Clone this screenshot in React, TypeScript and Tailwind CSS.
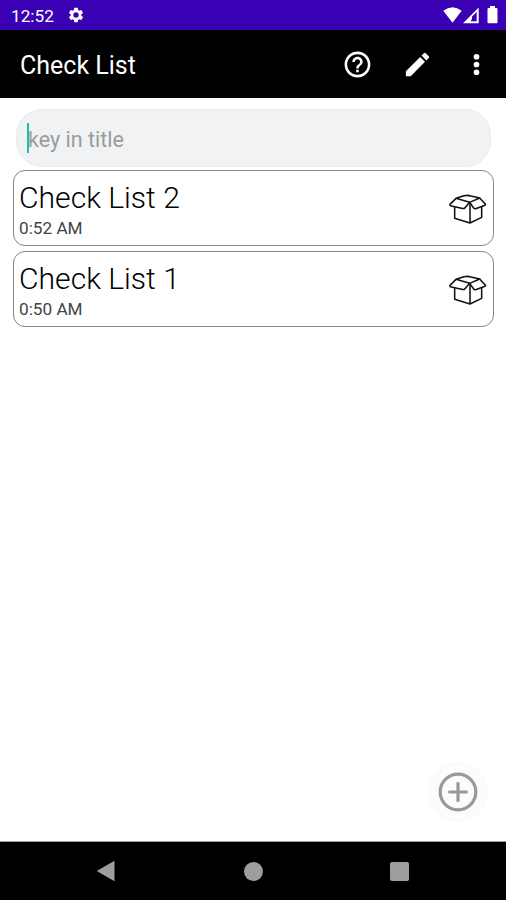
import React from "react";

function BoxIcon() {
  return (
    <svg className="h-[31px] w-[38px]" viewBox="39 42 114 93" fill="none" stroke="#111" strokeWidth="4.6" strokeLinejoin="round">
      <path d="M60 55 L84 47.500 Q94 44.500 105 48 L131 54 L101 67 Z" />
      <path d="M60 55 L42 73 Q41 77 46 78 L80 85.500 Q84 86.500 87 83 L101 67 L113 84 Q115 87 119 86 L147 76 Q150 74 147 71 L131 54" />
      <path d="M56 81 V115 L102 129 L137 112 V80 M102 70 V129" />
    </svg>
  );
}

function Card({ title, time }: { title: string; time: string }) {
  return (
    <div className="flex h-[76px] items-center justify-between rounded-[12px] border border-[#858585] bg-white pl-[5px] pr-[6px]">
      <div className="pt-[3px]">
        <div className="whitespace-nowrap text-[30.1px] font-light leading-[34px] text-black">{title}</div>
        <div className="mt-[3px] text-[17.2px] font-normal leading-[20px] text-[#444]">{time}</div>
      </div>
      <div className="pt-[3px]"><BoxIcon /></div>
    </div>
  );
}

export default function App() {
  return (
    <div className="flex h-[900px] w-[506px] flex-col overflow-hidden bg-white font-[Roboto,sans-serif]">
      <header>
        <div className="flex h-[30px] items-center bg-[#3a00b3] pl-[11px] pr-[8px] text-white">
          <span className="w-[56px] pt-[3px] text-[17.2px] font-normal">12:52</span>
          <svg className="size-[18px]" viewBox="0 0 24 24" fill="white">
            <path d="M19.14 12.94c.04-.3.06-.61.06-.94s-.02-.64-.07-.94l2.03-1.58a.49.49 0 0 0 .12-.61l-1.92-3.32a.49.49 0 0 0-.59-.22l-2.39.96a7 7 0 0 0-1.62-.94l-.36-2.54a.48.48 0 0 0-.48-.41h-3.84a.48.48 0 0 0-.47.41l-.36 2.54a7 7 0 0 0-1.62.94l-2.39-.96a.48.48 0 0 0-.59.22L2.74 8.87a.47.47 0 0 0 .12.61l2.03 1.58a6 6 0 0 0 0 1.88l-2.03 1.58a.49.49 0 0 0-.12.61l1.92 3.32c.12.22.37.29.59.22l2.39-.96c.5.38 1.03.7 1.62.94l.36 2.54c.05.24.24.41.48.41h3.84c.24 0 .44-.17.47-.41l.36-2.54a7 7 0 0 0 1.62-.94l2.39.96c.22.08.47 0 .59-.22l1.92-3.32a.47.47 0 0 0-.12-.61zM12 15.6A3.6 3.6 0 1 1 12 8.4a3.6 3.6 0 0 1 0 7.2z" />
          </svg>
          <svg className="ml-auto h-[20px] w-[56px]" viewBox="442 5 56 20" fill="white">
            <path d="M443.3 10.8 Q452.5 3.7 461.7 10.8 L452.5 22.8 Z" />
            <path fillRule="evenodd" d="M463 23.3 L478.7 7.5 V23.3 Z M471 19.7 H472 V16.5 L476.7 12 V21.3 H471 Z" />
            <path d="M487.5 9 Q487.5 8 488.5 8 H490 V6 H495 V8 H496.5 Q497.5 8 497.5 9 V22 Q497.5 23.2 496.5 23.2 H488.5 Q487.5 23.2 487.5 22 Z" />
          </svg>
        </div>
        <div className="flex h-[68px] items-center bg-black pl-[20px] text-white">
          <h1 className="pt-[4px] text-[25px] font-normal">Check List</h1>
          <div className="ml-auto flex items-center">
            <svg className="mr-[29px] size-[31px]" viewBox="0 0 24 24" fill="white">
              <path d="M11 18h2v-2h-2v2zm1-16C6.48 2 2 6.48 2 12s4.48 10 10 10 10-4.480 10-10S17.520 2 12 2zm0 18c-4.410 0-8-3.590-8-8s3.590-8 8-8 8 3.590 8 8-3.590 8-8 8zm0-14c-2.210 0-4 1.790-4 4h2c0-1.100.9-2 2-2s2 .9 2 2c0 2-3 1.750-3 5h2c0-2.250 3-2.500 3-5 0-2.210-1.790-4-4-4z" />
            </svg>
            <svg className="mr-[28px] size-[31px]" viewBox="0 0 24 24" fill="white">
              <path d="M3 17.250V21h3.750L17.810 9.940l-3.750-3.750L3 17.250zM20.710 7.040a1 1 0 0 0 0-1.410l-2.340-2.340a1 1 0 0 0-1.410 0l-1.830 1.830 3.750 3.750 1.830-1.830z" />
            </svg>
            <svg className="mr-[14px] size-[31px]" viewBox="0 0 24 24" fill="white">
              <circle cx="12" cy="6" r="2.2" /><circle cx="12" cy="12" r="2.2" /><circle cx="12" cy="18" r="2.2" />
            </svg>
          </div>
        </div>
      </header>
      <main className="flex flex-1 flex-col pl-[13px] pr-[12px] pt-[11px]">
        <div className="ml-[3px] mr-[3px] flex h-[58px] items-center rounded-[26px] border border-[#eaecec] bg-[#f0f2f3] pl-[10px]">
          <div className="h-[30px] w-[2px] bg-[#16bfae]" />
          <span className="-ml-px pt-[4px] text-[21.5px] text-[#9a9c9d]">key in title</span>
        </div>
        <div className="mt-[3px] flex flex-col gap-[5px]">
          <Card title="Check List 2" time="0:52 AM" />
          <Card title="Check List 1" time="0:50 AM" />
        </div>
        <button className="mb-[19px] ml-auto mr-[6px] mt-auto flex size-[60px] items-center justify-center rounded-full border border-[#f9f9f9] bg-[#fcfcfc]">
          <svg className="size-[40px]" viewBox="0 0 40 40" fill="none" stroke="#999" strokeWidth="3.2">
            <circle cx="20" cy="20" r="17.8" /><path d="M20 10.300 V29.700 M10.300 20 H29.700" />
          </svg>
        </button>
      </main>
      <nav className="flex h-[59px] items-center border-t border-[#a0a0a0] bg-black pl-[96px]">
        <svg className="h-[22px] w-[19px]" viewBox="0 0 19 22" fill="#9e9e9e"><path d="M.7 11 L18.500 .7 V21.300 Z" /></svg>
        <div className="ml-[129px] size-[19px] rounded-full bg-[#9e9e9e]" />
        <div className="ml-[127px] size-[19px] rounded-[2px] bg-[#9e9e9e]" />
      </nav>
    </div>
  );
}
